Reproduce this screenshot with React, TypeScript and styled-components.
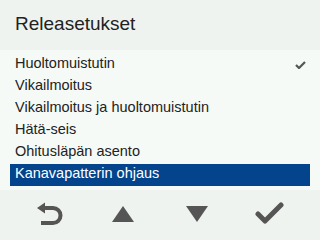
import React from 'react'
import styled, { createGlobalStyle } from 'styled-components'

const GlobalStyle = createGlobalStyle`
    html, body {
        margin: 0;
        padding: 0;
        background: #f5faf7;
    }
    body {
        font-family: "Liberation Sans", Arial, sans-serif;
    }
`

const Screen = styled.div`
    width: 320px;
    height: 240px;
    display: flex;
    flex-direction: column;
    overflow: hidden;
    background: #f5faf7;
`

const Header = styled.div`
    height: 50px;
    box-sizing: border-box;
    padding: 12px 0 0 15px;
    background: #eef3ef;
`

const Title = styled.div`
    font-size: 19px;
    line-height: 24px;
    color: #222;
`

const List = styled.div`
    height: 140px;
    box-sizing: border-box;
    padding: 4px 10px 0 10px;
    display: flex;
    flex-direction: column;
    background: #f5faf7;
`

const Row = styled.div<{ $selected?: boolean }>`
    height: 22px;
    box-sizing: border-box;
    padding: 0 4px 4px 5px;
    display: flex;
    align-items: flex-start;
    justify-content: space-between;
    font-size: 14.5px;
    line-height: 18px;
    color: ${p => (p.$selected ? '#ffffff' : '#222')};
    background: ${p => (p.$selected ? '#03448c' : 'transparent')};
    white-space: nowrap;
`

const Tick = styled.svg`
    margin-top: 7px;
    margin-right: 0;
`

const Footer = styled.div`
    flex: 1;
    display: grid;
    grid-template-columns: repeat(4, 1fr);
    padding: 0 13px;
    background: #eef3ef;
`

const Key = styled.div`
    display: flex;
    align-items: center;
    justify-content: center;
    padding-bottom: 2px;
`

const items = [
    'Huoltomuistutin',
    'Vikailmoitus',
    'Vikailmoitus ja huoltomuistutin',
    'Hätä-seis',
    'Ohitusläpän asento',
    'Kanavapatterin ohjaus',
]

const checked = 0
const selected = 5

const App = () => {
    return (
        <>
            <GlobalStyle />
            <Screen>
                <Header>
                    <Title>Releasetukset</Title>
                </Header>
                <List>
                    {items.map((label, i) => (
                        <Row key={label} $selected={i === selected}>
                            <span>{label}</span>
                            {i === checked && (
                                <Tick width="11" height="8" viewBox="0 0 11 8">
                                    <path d="M1 4 L4 7 L10 1" fill="none" stroke="#555" strokeWidth="2.2" />
                                </Tick>
                            )}
                        </Row>
                    ))}
                </List>
                <Footer>
                    <Key>
                        <svg width="28" height="24" viewBox="0 0 28 24">
                            <path d="M1 6 L9 0.5 L9 11.5 Z" fill="#555" />
                            <path d="M8 6 H17 A7.5 7.5 0 0 1 17 21 H5" fill="none" stroke="#555" strokeWidth="4" />
                        </svg>
                    </Key>
                    <Key>
                        <svg width="24" height="18" viewBox="0 0 24 18">
                            <path d="M1 17 L23 17 L12 1 Z" fill="#555" />
                        </svg>
                    </Key>
                    <Key>
                        <svg width="24" height="18" viewBox="0 0 24 18">
                            <path d="M1 1 L23 1 L12 17 Z" fill="#555" />
                        </svg>
                    </Key>
                    <Key>
                        <svg width="30" height="24" viewBox="0 0 30 24">
                            <path d="M3 12 L10 19 L26 3" fill="none" stroke="#555" strokeWidth="5" strokeLinecap="round" strokeLinejoin="round" />
                        </svg>
                    </Key>
                </Footer>
            </Screen>
        </>
    )
}

export default App
